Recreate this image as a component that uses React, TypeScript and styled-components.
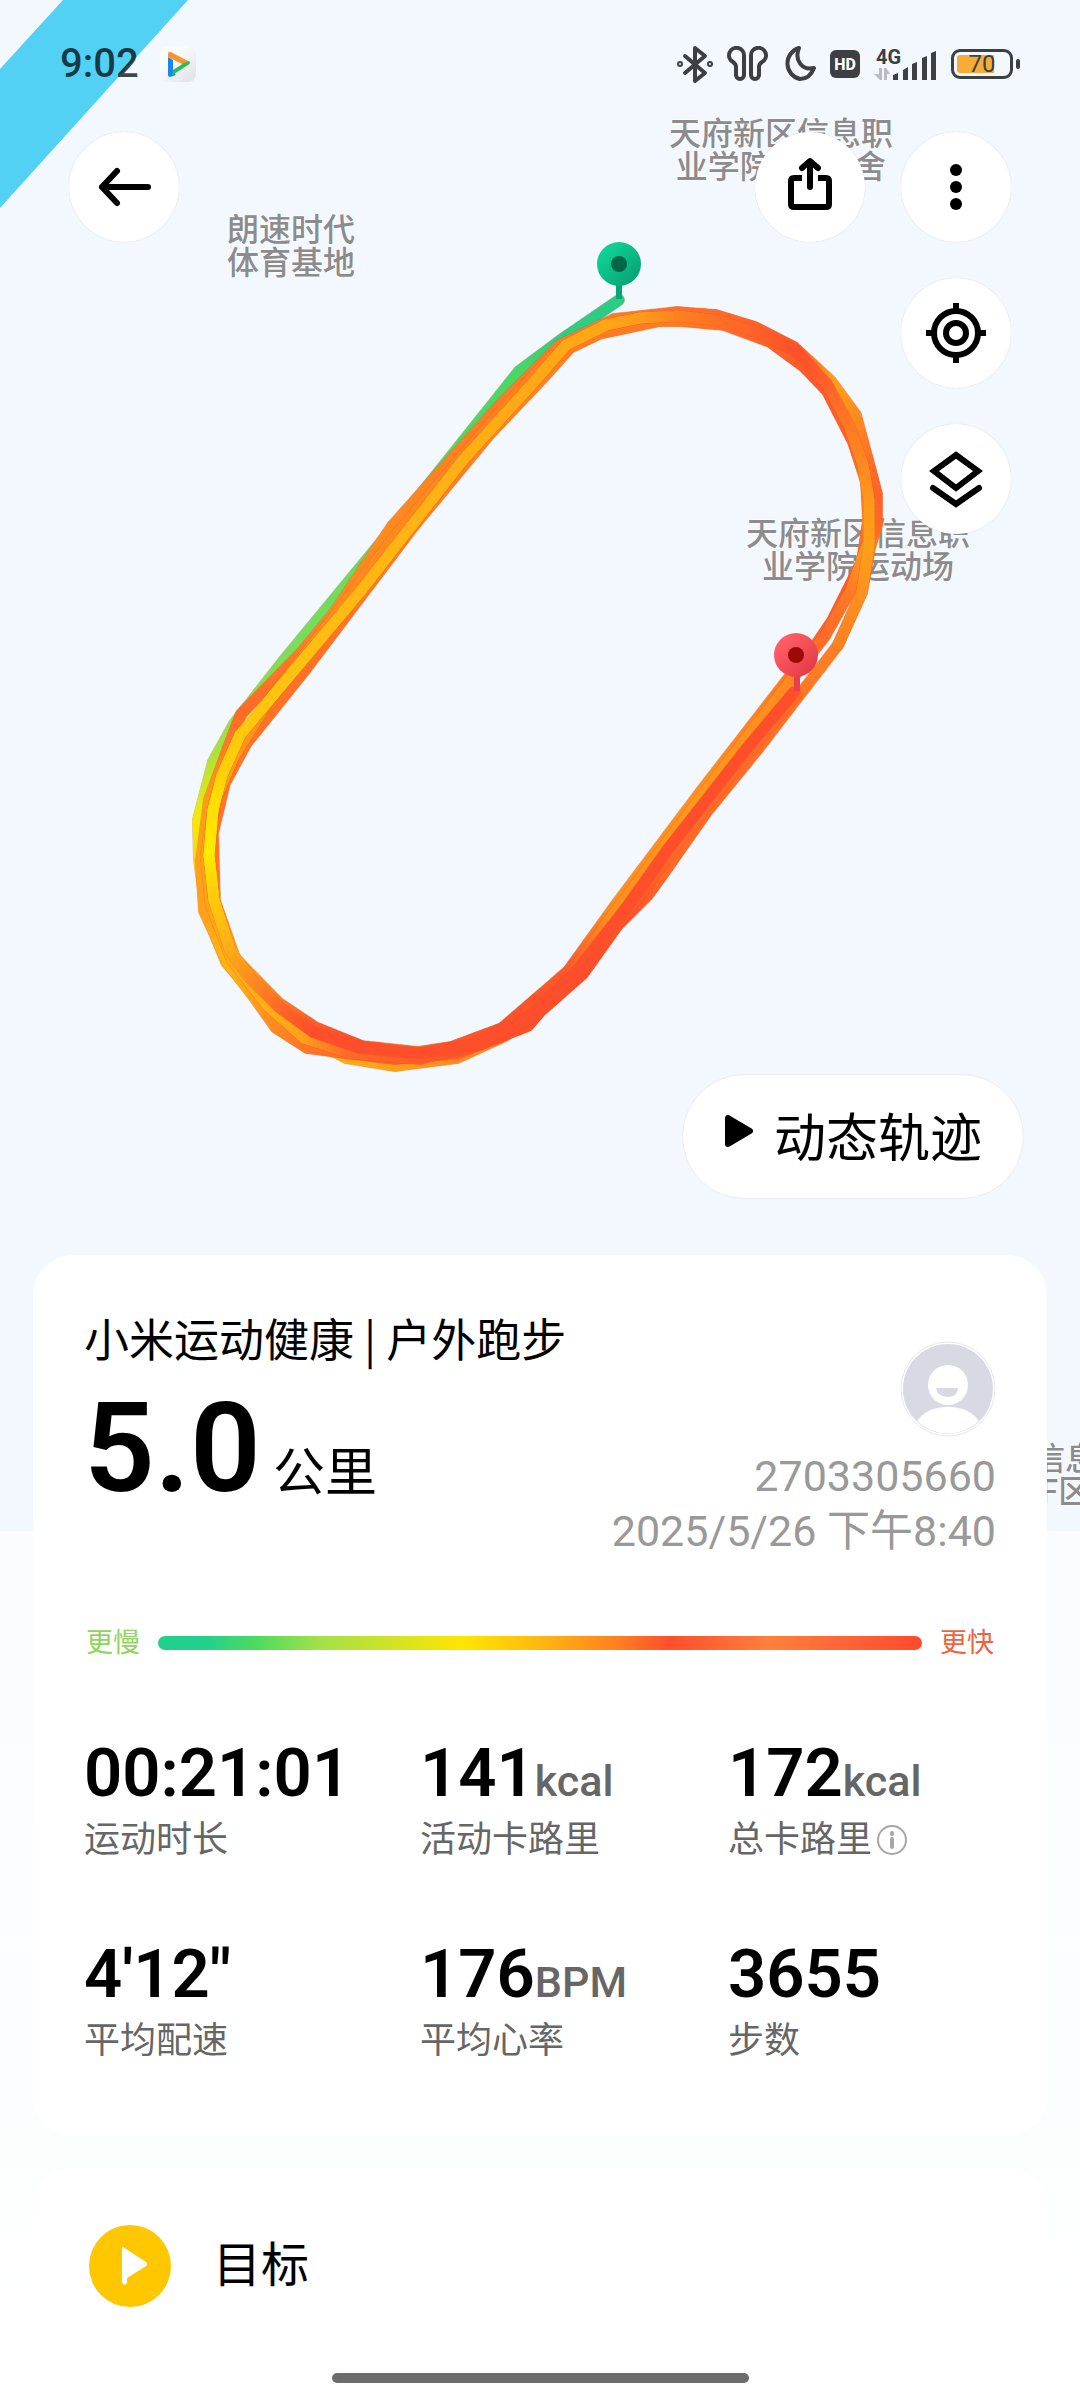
import { ReactNode } from "react";
import styled, { createGlobalStyle } from "styled-components";

const GlobalStyle = createGlobalStyle`
  * {
    box-sizing: border-box;
  }
  body {
    margin: 0;
    background: #fff;
    color: #000;
    font-family: Roboto, "Noto Sans CJK SC", sans-serif;
  }
  button {
    padding: 0;
    border: 0;
    background: none;
    color: inherit;
    font: inherit;
    cursor: pointer;
  }
  svg {
    display: block;
  }
`;

const MAP_WIDTH = 1080;
const MAP_HEIGHT = 1531;

const Page = styled.div`
  position: relative;
  display: flex;
  flex-direction: column;
  min-height: 100vh;
  overflow: hidden;
  background: linear-gradient(180deg, #fafcff 1531px, #fcfefe 2150px, #fff 2300px);
`;

/* ---------- map ---------- */

const MapLayer = styled.div`
  position: absolute;
  top: 0;
  left: 0;
  right: 0;
  height: ${MAP_HEIGHT}px;
  overflow: hidden;
  background: #f3f8ff;
`;
const MapArt = styled.svg`
  position: absolute;
  top: 0;
  left: 0;
  width: 100%;
  height: 100%;
`;
const MapLabel = styled.div<{ $x: number; $y: number; $align?: string }>`
  position: absolute;
  left: ${(p) => (p.$x / MAP_WIDTH) * 100}%;
  top: ${(p) => p.$y}px;
  transform: translateX(-50%);
  color: #8c8c8c;
  font-family: "Noto Sans CJK SC", sans-serif;
  font-size: 32px;
  font-weight: 500;
  line-height: 33px;
  text-align: ${(p) => p.$align || "center"};
  white-space: pre;
  text-shadow: 0 0 2px #fff, 0 0 2px #fff;
`;

const mapLabels = [
  { x: 291, y: 211, text: "朗速时代\n体育基地" },
  { x: 781, y: 115, text: "天府新区信息职\n业学院1号宿舍" },
  { x: 858, y: 515, text: "天府新区信息职\n业学院运动场" },
  { x: 1081, y: 1440, text: "信息职\n F区", align: "left" },
];

type TrackPoint = [number, number, string];

const firstLap: TrackPoint[] = [
  [619, 300, "#2bcc86"],
  [562, 339, "#2fcd80"],
  [519, 371, "#48d766"],
  [425, 489, "#55da60"],
  [284, 660, "#80dd58"],
  [234, 724, "#92de4c"],
  [213, 762, "#b4e335"],
  [198, 820, "#f5ea05"],
  [199, 860, "#ffd60a"],
  [206, 912, "#ffc010"],
  [226, 962, "#ffb812"],
  [270, 1014, "#ffb812"],
  [312, 1040, "#ffb812"],
  [346, 1058, "#ffaa16"],
  [395, 1066, "#ff9f1a"],
  [457, 1058, "#ff8a20"],
  [505, 1036, "#ff8020"],
  [560, 990, "#ff6a28"],
];

const outerLap: TrackPoint[] = [
  [677, 312, "#ff6f2a"],
  [614, 319, "#ff7a25"],
  [560, 345, "#ff7a25"],
  [500, 405, "#ff7a22"],
  [392, 526, "#ff8a20"],
  [334, 613, "#ff8820"],
  [301, 653, "#ff7a24"],
  [241, 714, "#ff6a28"],
  [228, 748, "#ff7a24"],
  [209, 800, "#ff9a1c"],
  [201, 862, "#ffa01a"],
  [204, 911, "#ffa01a"],
  [228, 963, "#ffb515"],
  [256, 1000, "#ffa01c"],
  [276, 1028, "#ff8a20"],
  [307, 1048, "#ff7526"],
  [345, 1053, "#ff6a28"],
  [395, 1059, "#ff5a2b"],
  [458, 1053, "#ff5a2b"],
  [500, 1037, "#ff4e2b"],
  [528, 1026, "#ff4e2b"],
  [540, 1012, "#ff4e2b"],
  [583, 974, "#ff4e2b"],
  [618, 925, "#ff4e2b"],
  [648, 895, "#ff5a2b"],
  [664, 873, "#ff6a28"],
  [706, 813, "#ff6a28"],
  [758, 749, "#ff6f28"],
  [838, 645, "#ff8022"],
  [862, 592, "#ff8c20"],
  [870, 548, "#ff8020"],
  [877, 525, "#ff6a28"],
  [877, 494, "#ff6228"],
  [870, 467, "#ff6a28"],
  [856, 415, "#ff8a20"],
  [831, 381, "#ffa018"],
  [794, 347, "#ff5528"],
  [755, 327, "#ff6028"],
  [716, 315, "#ff6a28"],
  [677, 312, "#ff6f2a"],
];

const innerLap: TrackPoint[] = [
  [680, 321, "#ff7a24"],
  [660, 321, "#ff7a24"],
  [599, 334, "#ff7a24"],
  [570, 348, "#ff7a24"],
  [544, 377, "#ff8022"],
  [490, 434, "#ff8022"],
  [414, 526, "#ff7a22"],
  [306, 669, "#ff7026"],
  [246, 744, "#ff7426"],
  [225, 783, "#ff7426"],
  [213, 833, "#ff7426"],
  [215, 901, "#ff8022"],
  [235, 958, "#ffa01a"],
  [279, 1003, "#ff7a24"],
  [315, 1027, "#ff5a2b"],
  [362, 1046, "#ff4e2b"],
  [418, 1052, "#ff7a24"],
  [451, 1047, "#ff5a2b"],
  [502, 1028, "#ff4e2b"],
  [568, 971, "#ff5a2b"],
  [617, 903, "#ff8f20"],
  [701, 791, "#ff8f20"],
  [787, 680, "#ff7a22"],
  [817, 643, "#ff6a28"],
  [832, 621, "#ff5a2b"],
  [862, 561, "#ff5a2b"],
  [868, 520, "#ff7a22"],
  [866, 482, "#ff7a22"],
  [853, 442, "#ff6228"],
  [827, 391, "#ff5a2b"],
  [804, 367, "#ff5a2b"],
  [770, 342, "#ff6228"],
  [724, 325, "#ff6f28"],
  [680, 321, "#ff7a24"],
];

const secondLap: TrackPoint[] = [
  [552, 356, "#ff8020"],
  [500, 412, "#ff8020"],
  [395, 536, "#ff8a20"],
  [330, 622, "#ff8a20"],
  [268, 702, "#ff8a20"],
  [234, 756, "#ff981c"],
  [215, 800, "#ffa01a"],
  [206, 856, "#ffa01a"],
  [211, 905, "#ffa01a"],
  [232, 960, "#ffa818"],
  [268, 1006, "#ffb015"],
  [304, 1038, "#ffa01c"],
  [350, 1053, "#ff6a28"],
  [420, 1059, "#ff5a2b"],
  [480, 1044, "#ff4e2b"],
  [532, 1018, "#ff4e2b"],
  [575, 978, "#ff4e2b"],
  [644, 890, "#ff5a2b"],
  [680, 840, "#ff6a28"],
  [745, 757, "#ff6a28"],
  [797, 695, "#ff6a28"],
];

const thirdLap: TrackPoint[] = [
  [560, 988, "#ff4e2b"],
  [612, 916, "#ff8f20"],
  [705, 792, "#ff981e"],
  [788, 684, "#ff8a20"],
  [825, 636, "#ff6a28"],
  [851, 590, "#ff7a24"],
  [867, 545, "#ff9a1c"],
];

const lastLap: TrackPoint[] = [
  [838, 645, "#ff8022"],
  [862, 592, "#ff9020"],
  [869, 545, "#ffa018"],
  [869, 500, "#ff981c"],
  [863, 465, "#ff8a20"],
  [849, 425, "#ff7a24"],
  [827, 384, "#ff632a"],
  [797, 352, "#ff4f2b"],
  [756, 332, "#ff6028"],
  [715, 320, "#ff7025"],
  [677, 316, "#ff8020"],
  [640, 318, "#ff9a1c"],
  [606, 325, "#ffa518"],
  [566, 345, "#ffa816"],
  [533, 383, "#ffa816"],
  [463, 460, "#ffb014"],
  [360, 592, "#ffb812"],
  [307, 655, "#ffc010"],
  [240, 735, "#ffc80e"],
  [222, 775, "#ffd008"],
  [213, 810, "#ffe004"],
  [209, 855, "#ffea00"],
  [214, 900, "#ffca0c"],
  [230, 950, "#ffae18"],
  [250, 978, "#ff9020"],
  [280, 1008, "#ff6a28"],
  [313, 1032, "#ff4e2b"],
  [360, 1048, "#ff4e2b"],
  [420, 1053, "#ff4e2b"],
  [470, 1045, "#ff4e2b"],
  [522, 1023, "#ff4e2b"],
  [576, 972, "#ff4e2b"],
  [626, 908, "#ff4e2b"],
  [668, 849, "#ff4e2b"],
  [704, 803, "#ff4e2b"],
  [747, 748, "#ff4e2b"],
  [794, 692, "#ff4e2b"],
];

const hexToRgb = (hex: string) =>
  [1, 3, 5].map((i) => parseInt(hex.slice(i, i + 2), 16));

const mixColor = (a: string, b: string, t: number) => {
  const from = hexToRgb(a);
  const to = hexToRgb(b);
  return `rgb(${from.map((v, i) => Math.round(v + (to[i] - v) * t)).join(",")})`;
};

const STEPS = 10;

/* each stretch is cut into short strokes so the colour follows the pace */
const Track = ({ points }: { points: TrackPoint[] }) => (
  <g strokeLinecap="round" strokeLinejoin="round" fill="none">
    <polyline
      points={points.map(([x, y]) => `${x},${y}`).join(" ")}
      stroke="#c0601c"
      strokeOpacity="0.4"
      strokeWidth="12"
    />
    {points.slice(1).map(([x2, y2, c2], i) => {
      const [x1, y1, c1] = points[i];
      return Array.from({ length: STEPS }, (_, s) => {
        const t = s / STEPS;
        const n = (s + 1) / STEPS;
        return (
          <line
            key={`${i}-${s}`}
            x1={x1 + (x2 - x1) * t}
            y1={y1 + (y2 - y1) * t}
            x2={x1 + (x2 - x1) * n}
            y2={y1 + (y2 - y1) * n}
            stroke={mixColor(c1, c2, t)}
            strokeWidth="11"
          />
        );
      });
    })}
  </g>
);

const RunMap = () => (
  <MapLayer>
    <MapArt viewBox={`0 0 ${MAP_WIDTH} ${MAP_HEIGHT}`} preserveAspectRatio="none" aria-hidden="true">
      <path d="M63 0H188L0 208V69Z" fill="#52d1f5" />
    </MapArt>
    {mapLabels.map((label) => (
      <MapLabel key={label.y} $x={label.x} $y={label.y} $align={label.align}>
        {label.text}
      </MapLabel>
    ))}
    <MapArt
      viewBox={`0 0 ${MAP_WIDTH} ${MAP_HEIGHT}`}
      preserveAspectRatio="xMidYMin meet"
      role="img"
      aria-label="跑步轨迹"
    >
      <defs>
        <linearGradient id="startPin" x1="0" y1="0" x2="1" y2="1">
          <stop offset="0.2" stopColor="#0fd095" />
          <stop offset="1" stopColor="#049c6c" />
        </linearGradient>
        <linearGradient id="endPin" x1="0" y1="0" x2="1" y2="1">
          <stop offset="0.2" stopColor="#ff5d64" />
          <stop offset="1" stopColor="#df3540" />
        </linearGradient>
      </defs>
      <Track points={firstLap} />
      <Track points={innerLap} />
      <Track points={outerLap} />
      <Track points={secondLap} />
      <Track points={thirdLap} />
      <Track points={lastLap} />
      <path d="M619 284V299" stroke="#08a577" strokeWidth="6" />
      <circle cx="619" cy="264" r="22" fill="url(#startPin)" />
      <circle cx="619" cy="264" r="8" fill="#00664a" />
      <path d="M797 675V691" stroke="#e8404a" strokeWidth="6" />
      <circle cx="796" cy="655" r="22" fill="url(#endPin)" />
      <circle cx="796" cy="655" r="8" fill="#9b0a06" />
    </MapArt>
  </MapLayer>
);

/* ---------- status bar ---------- */

const Hero = styled.header`
  position: relative;
  display: flex;
  flex-direction: column;
  min-height: 1255px;
  padding-bottom: 56px;
`;
const StatusBar = styled.div`
  display: flex;
  align-items: center;
  justify-content: space-between;
  height: 132px;
  padding: 0 60px 4px;
  color: #3d4043;
`;
const StatusGroup = styled.div<{ $gap: number }>`
  display: flex;
  align-items: center;
  gap: ${(p) => p.$gap}px;
`;
const Clock = styled.time`
  color: rgba(0, 0, 0, 0.73);
  font-size: 40px;
  font-weight: 500;
  line-height: 48px;
`;
const HdBadge = styled.span`
  display: flex;
  align-items: center;
  justify-content: center;
  width: 30px;
  height: 28px;
  border-radius: 6px;
  background: #3d4043;
  color: #fff;
  font-size: 16px;
  font-weight: 800;
`;
const Signal = styled.div`
  position: relative;
  width: 63px;
  height: 34px;
`;
const NetworkType = styled.span`
  position: absolute;
  top: 0;
  left: 2px;
  font-size: 20px;
  font-weight: 700;
  line-height: 20px;
`;
const Battery = styled.div`
  display: flex;
  align-items: center;
  gap: 3px;
  &::after {
    content: "";
    width: 4px;
    height: 10px;
    border-radius: 2px;
    background: currentColor;
  }
`;
const BatteryBody = styled.div`
  display: flex;
  align-items: center;
  justify-content: center;
  width: 62px;
  height: 30px;
  border: 3px solid currentColor;
  border-radius: 9px;
  background: linear-gradient(90deg, #f6ad37 74%, transparent 74%) content-box;
  padding: 3px;
  color: #3d4043;
  font-size: 24px;
  line-height: 20px;
`;

const Status = () => (
  <StatusBar>
    <StatusGroup $gap={21}>
      <Clock>9:02</Clock>
      <svg width="36" height="36" viewBox="0 0 36 36" aria-hidden="true">
        <defs>
          <linearGradient id="tile" x1="0" y1="0" x2="1" y2="1">
            <stop offset="0.3" stopColor="#fbfcfe" />
            <stop offset="1" stopColor="#dfe1e6" />
          </linearGradient>
        </defs>
        <rect width="36" height="36" rx="8" fill="url(#tile)" />
        <path d="M8 11 13 14V26L16 29 10 31Q8 31 8 29Z" fill="#1c86ee" />
        <path d="M8 8Q8 5 11 6L28 15Q31 17 28 19L24 19 8 11Z" fill="#f9952e" />
        <path d="M13 24 24 17 29 15Q31 17 28 19L11 30Q13 29 13 24Z" fill="#27bd59" />
      </svg>
    </StatusGroup>
    <StatusGroup $gap={14}>
      <svg width="36" height="39" viewBox="0 0 36 39" fill="none" stroke="currentColor" strokeWidth="4" strokeLinejoin="round" strokeLinecap="round" aria-hidden="true">
        <path d="M8 11 28 28 18 36V3L28 11 8 28" />
        <circle cx="3" cy="19" r="1" />
        <circle cx="33" cy="19" r="1" />
      </svg>
      <svg width="41" height="36" viewBox="0 0 41 36" fill="none" stroke="currentColor" strokeWidth="4" strokeLinejoin="round" aria-hidden="true">
        <path d="M17 10A7.500 7.500 0 1 0 6 16Q9 18 9 21V29A4 4 0 0 0 17 29Z" />
        <path d="M24 10A7.500 7.500 0 1 1 35 16Q32 18 32 21V29A4 4 0 0 1 24 29Z" />
      </svg>
      <svg width="34" height="36" viewBox="0 0 34 36" fill="none" stroke="currentColor" strokeWidth="4" strokeLinejoin="round" aria-hidden="true">
        <path d="M17 2C12 14 20 25 32 22C29 30 24 33 18 33A16 16 0 0 1 17 2Z" />
      </svg>
      <HdBadge>HD</HdBadge>
      <Signal>
        <NetworkType>4G</NetworkType>
        <svg width="63" height="34" viewBox="0 0 63 34" aria-hidden="true">
          <path d="M0 27H5V21H8V33H6ZM10 33V21H12L16 27H13V33Z" fill="#b9bcc0" />
          <path d="M19 33V28L24 26V33ZM29 33V23L34 20V33ZM38 33V17L43 15V33ZM48 33V11L53 9V33ZM57 33V6L62 4V33Z" fill="#3d4043" />
        </svg>
      </Signal>
      <Battery>
        <BatteryBody>70</BatteryBody>
      </Battery>
    </StatusGroup>
  </StatusBar>
);

/* ---------- map controls ---------- */

const Toolbar = styled.nav`
  display: flex;
  align-items: flex-start;
  justify-content: space-between;
  padding: 0 69px;
`;
const ActionColumn = styled.div`
  display: flex;
  flex-direction: column;
  align-items: flex-end;
  gap: 36px;
`;
const ActionRow = styled.div`
  display: flex;
  gap: 36px;
`;
const RoundButton = styled.button`
  width: 110px;
  height: 110px;
  border-radius: 50%;
  background: #fff;
  box-shadow: 0 0 1px rgba(0, 0, 0, 0.2);
`;
const PlayButton = styled.button`
  display: flex;
  align-items: center;
  align-self: flex-end;
  gap: 20px;
  height: 125px;
  margin: auto 56px 0 0;
  padding: 6px 41px 0;
  border: 1px solid #ececf0;
  border-radius: 63px;
  background: #fff;
  font-size: 52px;
  line-height: 76px;
  svg {
    margin-bottom: 18px;
  }
`;

const IconButton = ({ label, children }: { label: string; children: ReactNode }) => (
  <RoundButton type="button" aria-label={label}>
    <svg width="110" height="110" viewBox="0 0 110 110" fill="none" stroke="#000" strokeWidth="6" aria-hidden="true">
      {children}
    </svg>
  </RoundButton>
);

const MapControls = () => (
  <Toolbar>
    <IconButton label="返回">
      <path d="M79 55H33M48 39 33 55 48 71" strokeLinecap="round" strokeLinejoin="round" />
    </IconButton>
    <ActionColumn>
      <ActionRow>
        <IconButton label="分享">
          <path d="M47 46H39Q36 46 36 49V72Q36 75 39 75H71Q74 75 74 72V49Q74 46 71 46H63" />
          <path d="M55 55V30M47 36 55 29 63 36" strokeLinecap="round" strokeLinejoin="round" />
        </IconButton>
        <IconButton label="更多">
          <g fill="#000" stroke="none">
            <circle cx="55" cy="38" r="6" />
            <circle cx="55" cy="55" r="6" />
            <circle cx="55" cy="72" r="6" />
          </g>
        </IconButton>
      </ActionRow>
      <IconButton label="定位">
        <circle cx="55" cy="55" r="22" />
        <circle cx="55" cy="55" r="10" />
        <path d="M55 25V33M55 77V85M25 55H33M77 55H85" />
      </IconButton>
      <IconButton label="图层">
        <path d="M55 31 77 47 55 64 33 47Z" />
        <path d="M32 64 55 80 78 64" strokeLinecap="round" />
      </IconButton>
    </ActionColumn>
  </Toolbar>
);

/* ---------- summary ---------- */

const Main = styled.main`
  position: relative;
  display: flex;
  flex: 1;
  flex-direction: column;
  gap: 32px;
  padding: 0 33px;
`;
const Card = styled.section`
  border-radius: 40px;
  background: #fff;
`;
const SummaryCard = styled(Card)`
  padding: 56px 51px 68px;
`;
const SummaryHead = styled.div`
  display: flex;
  justify-content: space-between;
`;
const Title = styled.h1`
  margin: 0;
  font-family: "Noto Sans CJK SC", sans-serif;
  font-size: 45px;
  font-weight: 400;
  line-height: 54px;
  white-space: nowrap;
`;
const Distance = styled.p`
  display: flex;
  align-items: baseline;
  gap: 12px;
  margin: 29px 0 0;
  font-size: 52px;
  line-height: 110px;
  strong {
    font-size: 124px;
    font-weight: 600;
  }
`;
const Profile = styled.div`
  display: flex;
  flex-direction: column;
  align-items: flex-end;
  padding-top: 30px;
  color: #999;
  font-size: 43px;
  line-height: 55px;
  white-space: nowrap;
`;
const Avatar = styled.svg`
  width: 96px;
  height: 96px;
  margin-bottom: 12px;
`;
const Pace = styled.div`
  display: flex;
  align-items: center;
  gap: 18px;
  margin: 64px 2px 70px;
  font-size: 27px;
  line-height: 40px;
`;
const PaceLabel = styled.span<{ $color: string }>`
  color: ${(p) => p.$color};
`;
const PaceBar = styled.div`
  flex: 1;
  height: 14px;
  border-radius: 7px;
  background: linear-gradient(
    90deg,
    #21d08c 6%,
    #4edb5e 13%,
    #a3e04a 21%,
    #ffe600 40%,
    #ffb810 50%,
    #ff8020 60%,
    #ff4f2c 67%,
    #ff803c 80%,
    #ff4a2f 100%
  );
`;
const Stats = styled.dl`
  display: grid;
  grid-template-columns: 336fr 308fr 268fr;
  row-gap: 67px;
  margin: 0;
`;
const Stat = styled.div`
  display: flex;
  flex-direction: column-reverse;
`;
const StatLabel = styled.dt`
  display: flex;
  align-items: center;
  gap: 4px;
  color: #666;
  font-size: 36px;
  line-height: 54px;
`;
const StatValue = styled.dd`
  margin: 0;
  font-size: 67px;
  font-weight: 600;
  line-height: 80px;
  white-space: nowrap;
`;
const Unit = styled.span`
  color: #666;
  font-size: 43px;
  font-weight: 500;
  line-height: 48px;
`;

const stats = [
  { label: "运动时长", value: "00:21:01" },
  { label: "活动卡路里", value: "141", unit: "kcal" },
  { label: "总卡路里", value: "172", unit: "kcal", info: true },
  { label: "平均配速", value: "4'12\"" },
  { label: "平均心率", value: "176", unit: "BPM" },
  { label: "步数", value: "3655" },
];

const GoalCard = styled(Card)`
  display: flex;
  align-items: center;
  gap: 42px;
  padding: 56px 55px;
  font-size: 48px;
  line-height: 72px;
  h2 {
    margin: 0;
    font-size: inherit;
    font-weight: 400;
  }
`;
const HomeIndicator = styled.div`
  position: relative;
  align-self: center;
  width: 417px;
  max-width: 50%;
  height: 10px;
  margin: 10px 0 17px;
  border-radius: 5px;
  background: #6d6d6d;
`;

export default function App() {
  return (
    <Page lang="zh-CN">
      <GlobalStyle />
      <RunMap />
      <Hero>
        <Status />
        <MapControls />
        <PlayButton type="button">
          <svg width="30" height="34" viewBox="0 0 30 34" aria-hidden="true">
            <path d="M4 4V30L26 17Z" stroke="#000" strokeWidth="6" strokeLinejoin="round" />
          </svg>
          动态轨迹
        </PlayButton>
      </Hero>

      <Main>
        <SummaryCard>
          <SummaryHead>
            <div>
              <Title>小米运动健康 | 户外跑步</Title>
              <Distance>
                <strong>5.0</strong>公里
              </Distance>
            </div>
            <Profile>
              <Avatar viewBox="0 0 96 96" role="img" aria-label="头像">
                <circle cx="48" cy="48" r="47" fill="#fff" stroke="#e8e8ec" />
                <circle cx="48" cy="48" r="45" fill="#d8d9e2" />
                <path d="M17 80C30 61 66 61 79 80A45 45 0 0 1 17 80Z" fill="#fff" />
                <circle cx="48" cy="44" r="20" fill="#fff" />
                <path d="M36 47H58Q58 56 47 56Q37 55 36 47Z" fill="#d8d9e2" />
              </Avatar>
              <span>2703305660</span>
              <time dateTime="2025-05-26T20:40">2025/5/26 下午8:40</time>
            </Profile>
          </SummaryHead>

          <Pace>
            <PaceLabel $color="#8fd45c">更慢</PaceLabel>
            <PaceBar />
            <PaceLabel $color="#ef6343">更快</PaceLabel>
          </Pace>

          <Stats>
            {stats.map((item) => (
              <Stat key={item.label}>
                <StatLabel>
                  {item.label}
                  {item.info && (
                    <button type="button" aria-label="总卡路里说明">
                      <svg width="32" height="32" viewBox="0 0 32 32" fill="none" stroke="#a6a6a6" strokeWidth="2">
                        <circle cx="16" cy="16" r="14" />
                        <path d="M16 15V23M16 9V10" strokeWidth="4" strokeLinecap="round" />
                      </svg>
                    </button>
                  )}
                </StatLabel>
                <StatValue>
                  {item.value}
                  {item.unit && <Unit>{item.unit}</Unit>}
                </StatValue>
              </Stat>
            ))}
          </Stats>
        </SummaryCard>

        <GoalCard>
          <svg width="83" height="83" viewBox="0 0 83 83" aria-hidden="true">
            <circle cx="42" cy="42" r="41" fill="#ffc700" />
            <path d="M35 23 58 38Q60 40 58 42L39 54V59Q37 62 34 59V24Q34 22 35 23Z" fill="#fff" />
          </svg>
          <h2>目标</h2>
        </GoalCard>
      </Main>
      <HomeIndicator />
    </Page>
  );
}
